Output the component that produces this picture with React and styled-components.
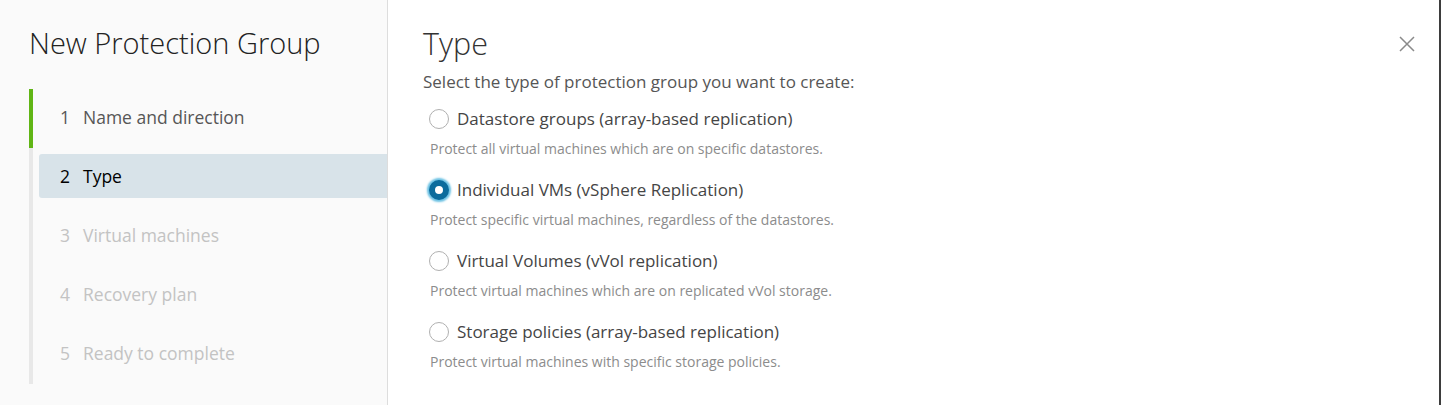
import React from "react";
import styled, { createGlobalStyle } from "styled-components";

const GlobalStyle = createGlobalStyle`
  html, body {
    margin: 0;
    padding: 0;
    background: #ffffff;
    font-family: "Open Sans", Lato, sans-serif;
  }
`;

const Modal = styled.div`
  display: flex;
  width: 1441px;
  height: 405px;
  box-sizing: border-box;
  border-right: 2px solid #3d3d3d;
  background: #ffffff;
  overflow: hidden;
`;

const Sidebar = styled.nav`
  width: 388px;
  flex-shrink: 0;
  box-sizing: border-box;
  background: #fafafa;
  border-right: 1px solid #dddddd;
  padding: 26px 0 0 29px;
`;

const SideTitle = styled.h1`
  margin: 0 0 29px 0;
  font-size: 29px;
  font-weight: 300;
  color: #222222;
  line-height: 34px;
  white-space: nowrap;
`;

const StepList = styled.ol`
  list-style: none;
  margin: 0;
  padding: 6px 0 9px 6px;
  display: flex;
  flex-direction: column;
  gap: 15px;
  border-left: 4px solid #e8e8e8;
  position: relative;
`;

const Progress = styled.span`
  position: absolute;
  left: -4px;
  top: 0;
  width: 4px;
  height: 59px;
  background: #60b515;
`;

const Step = styled.li`
  display: flex;
  align-items: center;
  height: 44px;
  padding-left: 21px;
  border-radius: 3px 0 0 3px;
  font-size: 17.5px;
  background: ${(p) => (p.$active ? "#d8e3e9" : "transparent")};
  color: ${(p) =>
    p.$active ? "#000000" : p.$done ? "#565656" : "#c3c3c3"};
`;

const StepNum = styled.span`
  width: 23px;
`;

const Main = styled.main`
  flex: 1;
  display: flex;
  padding: 26px 0 0 35px;
`;

const Content = styled.div`
  flex: 1;
`;

const Heading = styled.h2`
  margin: 0 0 12px;
  font-size: 30.5px;
  font-weight: 300;
  color: #333333;
  line-height: 34px;
`;

const Lead = styled.p`
  margin: 0 0 17px;
  font-size: 17px;
  color: #565656;
  line-height: 20px;
`;

const Options = styled.div`
  display: flex;
  flex-direction: column;
  gap: 23px;
`;

const Option = styled.label`
  display: flex;
  flex-direction: column;
  gap: 11px;
`;

const OptionRow = styled.span`
  display: flex;
  align-items: center;
  gap: 8px;
  padding-left: 6px;
  font-size: 17px;
  color: #454545;
  line-height: 20px;
`;

const Radio = styled.span`
  width: 20px;
  height: 20px;
  box-sizing: border-box;
  border-radius: 50%;
  flex-shrink: 0;
  border: ${(p) => (p.$checked ? "6px solid #0a6b9c" : "1px solid #b0b0b0")};
  background: #ffffff;
  box-shadow: ${(p) => (p.$checked ? "0 0 2px 2px #6bc1e3" : "none")};
`;

const Hint = styled.span`
  padding-left: 7px;
  font-size: 14px;
  color: #8c8c8c;
  line-height: 17px;
`;

const CloseButton = styled.button`
  align-self: flex-start;
  margin: 8px 22px 0 0;
  width: 20px;
  height: 20px;
  padding: 0;
  border: none;
  background: none;
  display: flex;
  align-items: center;
  justify-content: center;
`;

const steps = [
  "Name and direction",
  "Type",
  "Virtual machines",
  "Recovery plan",
  "Ready to complete",
];

const options = [
  {
    label: "Datastore groups (array-based replication)",
    hint: "Protect all virtual machines which are on specific datastores.",
  },
  {
    label: "Individual VMs (vSphere Replication)",
    hint: "Protect specific virtual machines, regardless of the datastores.",
    checked: true,
  },
  {
    label: "Virtual Volumes (vVol replication)",
    hint: "Protect virtual machines which are on replicated vVol storage.",
  },
  {
    label: "Storage policies (array-based replication)",
    hint: "Protect virtual machines with specific storage policies.",
  },
];

const App = () => {
  return (
    <>
      <GlobalStyle />
      <Modal>
        <Sidebar>
          <SideTitle>New Protection Group</SideTitle>
          <StepList>
            <Progress />
            {steps.map((s, i) => (
              <Step key={s} $active={i === 1} $done={i === 0}>
                <StepNum>{i + 1}</StepNum>
                {s}
              </Step>
            ))}
          </StepList>
        </Sidebar>
        <Main>
          <Content>
            <Heading>Type</Heading>
            <Lead>Select the type of protection group you want to create:</Lead>
            <Options>
              {options.map((o) => (
                <Option key={o.label}>
                  <OptionRow>
                    <Radio $checked={o.checked} />
                    {o.label}
                  </OptionRow>
                  <Hint>{o.hint}</Hint>
                </Option>
              ))}
            </Options>
          </Content>
          <CloseButton aria-label="Close">
            <svg width="16" height="16" viewBox="0 0 16 16">
              <path d="M1 1L15 15M15 1L1 15" stroke="#8a8a8a" strokeWidth="1.5" />
            </svg>
          </CloseButton>
        </Main>
      </Modal>
    </>
  );
};

export default App;
